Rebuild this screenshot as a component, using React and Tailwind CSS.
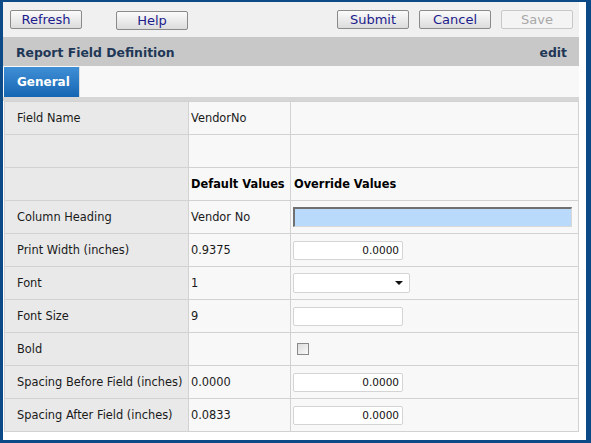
import React from "react";

const font = { fontFamily: '"DejaVu Sans", Verdana, sans-serif' };

function Btn({ children, disabled }) {
  return (
    <button
      className={
        disabled
          ? "w-[72px] h-[19px] rounded-[2px] border border-[#c8c8c8] bg-[#f4f4f4] text-[13px] leading-[17px] text-[#a8a8a8]"
          : "w-[72px] h-[19px] rounded-[2px] border border-[#8a8a8a] bg-gradient-to-b from-[#fbfbfb] to-[#dcdcdc] text-[13px] leading-[17px] text-[#1c1c8c]"
      }
      style={{ fontFamily: 'Tahoma, "DejaVu Sans", Verdana, sans-serif' }}
    >
      {children}
    </button>
  );
}

function NumInput({ value }) {
  return (
    <div className="w-[110px] h-[19px] bg-white border border-[#d4d4d4] rounded-[2px] text-right pr-[3px] text-[10.5px] leading-[17px] text-[#111]">
      {value}
    </div>
  );
}

const rows = [
  { label: "Field Name", def: "VendorNo", ov: null },
  { label: "", def: "", ov: null },
  { label: "", def: <b className="text-black">Default Values</b>, ov: <b className="text-black">Override Values</b>, textOv: true },
  {
    label: "Column Heading",
    def: "Vendor No",
    ov: (
      <div className="w-[279px] h-[20px] bg-[#b9dafb] border-t-2 border-l-2 border-b border-r border-t-[#707070] border-l-[#707070] border-b-[#d8d8d8] border-r-[#d8d8d8]" />
    ),
  },
  { label: "Print Width (inches)", def: "0.9375", ov: <NumInput value="0.0000" /> },
  {
    label: "Font",
    def: "1",
    ov: (
      <div className="w-[117px] h-[20px] bg-white border border-[#d4d4d4] rounded-[2px] flex items-center justify-end pr-[6px]">
        <svg width="8" height="4" viewBox="0 0 8 4">
          <path d="M0 0h8L4 4z" fill="#111" />
        </svg>
      </div>
    ),
  },
  { label: "Font Size", def: "9", ov: <NumInput value="" /> },
  {
    label: "Bold",
    def: "",
    ov: (
      <div className="ml-[4px] w-[12px] h-[12px] border border-[#8a8a8a] bg-gradient-to-br from-[#dcdcdc] to-[#fafafa]" />
    ),
  },
  { label: "Spacing Before Field (inches)", def: "0.0000", ov: <NumInput value="0.0000" /> },
  { label: "Spacing After Field (inches)", def: "0.0833", ov: <NumInput value="0.0000" /> },
];

export default function App() {
  return (
    <div
      className="w-[591px] h-[443px] bg-white border-[#0c4a87] border-l-[3px] border-t-2 border-r-[5px] border-b-[3px] flex flex-col"
      style={font}
    >
      <div className="w-[576px] h-[35px] bg-[#f0f0f0] flex items-center pl-[7px] pr-[6px]">
        <Btn>Refresh</Btn>
        <div className="ml-[34px]">
          <Btn>Help</Btn>
        </div>
        <div className="ml-auto flex gap-[10px]">
          <Btn>Submit</Btn>
          <Btn>Cancel</Btn>
          <Btn disabled>Save</Btn>
        </div>
      </div>
      <div className="w-[576px] h-[29px] bg-[#c8c8c8] flex items-center justify-between pl-[13px] pr-[12px] pt-[3px] text-[12.4px] font-bold text-[#1f3756]">
        <span>Report Field Definition</span>
        <span>edit</span>
      </div>
      <div className="w-[576px] h-[31px] bg-[#f8f8f8] flex items-end pl-px">
        <div className="w-[76px] h-[30px] bg-gradient-to-b from-[#3f8fd6] to-[#1466b3] border-r border-[#dcdcdc] text-white font-bold text-[12px] flex items-center pl-[13px]">
          General
        </div>
      </div>
      <div className="w-[576px] h-[4px] bg-[#d6d6d6]" />
      <table className="ml-px w-[575px] border-collapse text-[11.4px] text-[#1a1a1a]">
        <colgroup>
          <col className="w-[184px]" />
          <col className="w-[102px]" />
          <col />
        </colgroup>
        <tbody>
          {rows.map((r, i) => (
            <tr key={i} className="h-[33px]">
              <td className="border border-[#d2d2d2] bg-[#e9e9e9] pl-[12px] pr-0 pt-[2px] whitespace-nowrap p-0">
                {r.label}
              </td>
              <td className="border border-[#d2d2d2] bg-[#f8f8f8] pl-[2px] pt-[2px] whitespace-nowrap p-0">
                {r.def}
              </td>
              <td
                className={
                  r.textOv
                    ? "border border-[#d2d2d2] bg-[#f8f8f8] pl-[3px] pt-[2px] whitespace-nowrap p-0"
                    : "border border-[#d2d2d2] bg-[#f8f8f8] pl-[2px] whitespace-nowrap p-0"
                }
              >
                {r.ov}
              </td>
            </tr>
          ))}
        </tbody>
      </table>
    </div>
  );
}
